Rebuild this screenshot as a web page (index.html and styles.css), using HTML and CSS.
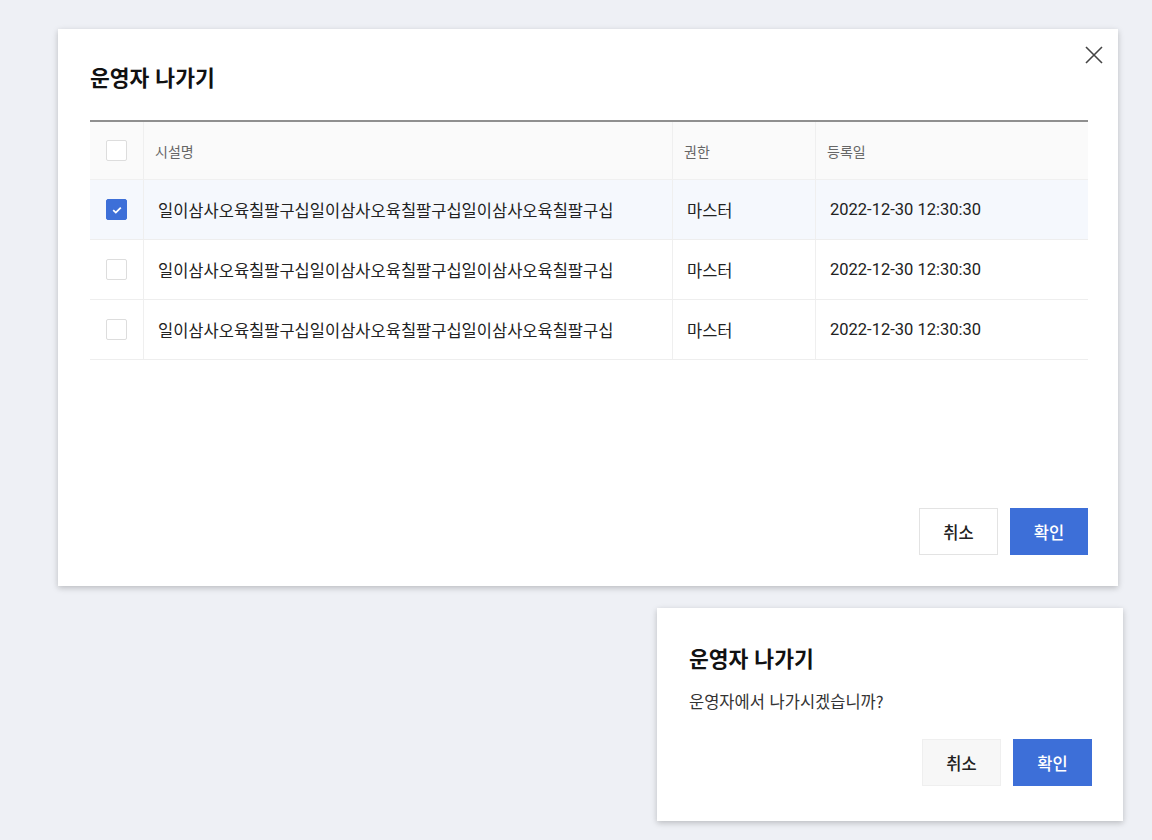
FILE: index.html
```html
<!DOCTYPE html>
<html lang="ko">
<head>
<meta charset="utf-8">
<link rel="stylesheet" href="styles.css">
</head>
<body>
<div class="modal modal-large">
  <button class="close" aria-label="닫기">
    <svg width="18" height="18" viewBox="0 0 18 18"><path d="M1 1L17 17M17 1L1 17" stroke="#444" stroke-width="1.6" fill="none"/></svg>
  </button>
  <h2 class="title">운영자 나가기</h2>
  <div class="table">
    <div class="row head">
      <div class="cell c-check"><span class="box"></span></div>
      <div class="cell c-name">시설명</div>
      <div class="cell c-role">권한</div>
      <div class="cell c-date">등록일</div>
    </div>
    <div class="row body selected">
      <div class="cell c-check"><span class="box checked"><svg width="12" height="10" viewBox="0 0 12 10"><path d="M2.2 5.2L4.8 7.6L9.8 2.6" stroke="#fff" stroke-width="1.8" fill="none"/></svg></span></div>
      <div class="cell c-name">일이삼사오육칠팔구십일이삼사오육칠팔구십일이삼사오육칠팔구십</div>
      <div class="cell c-role">마스터</div>
      <div class="cell c-date">2022-12-30 12:30:30</div>
    </div>
    <div class="row body">
      <div class="cell c-check"><span class="box"></span></div>
      <div class="cell c-name">일이삼사오육칠팔구십일이삼사오육칠팔구십일이삼사오육칠팔구십</div>
      <div class="cell c-role">마스터</div>
      <div class="cell c-date">2022-12-30 12:30:30</div>
    </div>
    <div class="row body">
      <div class="cell c-check"><span class="box"></span></div>
      <div class="cell c-name">일이삼사오육칠팔구십일이삼사오육칠팔구십일이삼사오육칠팔구십</div>
      <div class="cell c-role">마스터</div>
      <div class="cell c-date">2022-12-30 12:30:30</div>
    </div>
  </div>
  <div class="actions">
    <button class="btn btn-cancel">취소</button>
    <button class="btn btn-ok">확인</button>
  </div>
</div>

<div class="modal modal-small">
  <h2 class="title">운영자 나가기</h2>
  <p class="msg">운영자에서 나가시겠습니까?</p>
  <div class="actions">
    <button class="btn btn-cancel grey">취소</button>
    <button class="btn btn-ok">확인</button>
  </div>
</div>
</body>
</html>
```

FILE: styles.css
```css
* { box-sizing: border-box; }
html, body { margin: 0; padding: 0; }
body {
  width: 1152px;
  height: 840px;
  background: #eef0f5;
  font-family: Roboto, "Noto Sans CJK KR", sans-serif;
  color: #222;
  overflow: hidden;
  padding-top: 29px;
}
.modal {
  background: #fff;
  box-shadow: 0 2px 6px rgba(0,0,0,0.22);
  position: relative;
  display: flex;
  flex-direction: column;
}
.modal-large {
  margin-left: 58px;
  width: 1060px;
  height: 557px;
  padding: 33px 30px 31px 32px;
}
.modal-small {
  margin-left: 657px;
  margin-top: 22px;
  width: 466px;
  height: 213px;
  padding: 35px 31px 35px 32px;
}
.title {
  margin: 0;
  font-size: 21.5px;
  line-height: 30px;
  font-weight: 700;
  color: #111;
  font-family: "Noto Sans CJK KR", sans-serif;
}
.close {
  position: absolute;
  top: 17px;
  right: 15px;
  width: 18px;
  height: 18px;
  padding: 0;
  border: 0;
  background: none;
  display: block;
}
.close svg { display: block; }
.table {
  margin-top: 28px;
  border-top: 2px solid #8f8f8f;
}
.row {
  display: flex;
  border-bottom: 1px solid #eeeeee;
}
.row.head { height: 58px; background: #fafafa; border-bottom: 1px solid #f0f0f0; }
.row.body { height: 60px; }
.row.selected { background: #f5f8fd; }
.cell {
  display: flex;
  align-items: center;
  border-left: 1px solid #efefef;
}
.cell.c-check { border-left: 0; width: 53px; justify-content: center; }
.c-name { width: 529px; }
.c-role { width: 143px; }
.c-date { flex: 1; }
.head .cell { font-size: 14px; color: #666; padding-left: 11px; font-family: "Noto Sans CJK KR", sans-serif; }
.head .cell.c-check { padding-left: 0; }
.body .cell { font-size: 16.5px; color: #222; padding-left: 14px; }
.body .cell.c-check { padding-left: 0; }
.body .cell.c-date { font-size: 16.5px; }
.box {
  width: 21px;
  height: 21px;
  border: 1px solid #dddddd;
  border-radius: 2px;
  background: #fff;
  display: flex;
  align-items: center;
  justify-content: center;
}
.box.checked { background: #3d6fd8; border-color: #3d6fd8; }
.box svg { display: block; }
.actions {
  margin-top: auto;
  display: flex;
  justify-content: flex-end;
  gap: 12px;
}
.btn {
  width: 79px;
  height: 47px;
  font-family: "Noto Sans CJK KR", sans-serif;
  font-size: 16.5px;
  font-weight: 500;
  border: 1px solid #e3e3e3;
  background: #fff;
  color: #222;
  padding: 0;
}
.btn-ok {
  background: #3d6fd8;
  border-color: #3d6fd8;
  color: #fff;
  width: 78px;
}
.btn-cancel.grey { background: #f7f7f7; border-color: #efefef; }
.modal-small .btn-ok { width: 79px; }
.msg {
  margin: 16px 0 0;
  font-size: 16.5px;
  line-height: 24px;
  color: #333;
  font-family: "Noto Sans CJK KR", sans-serif;
}
```
